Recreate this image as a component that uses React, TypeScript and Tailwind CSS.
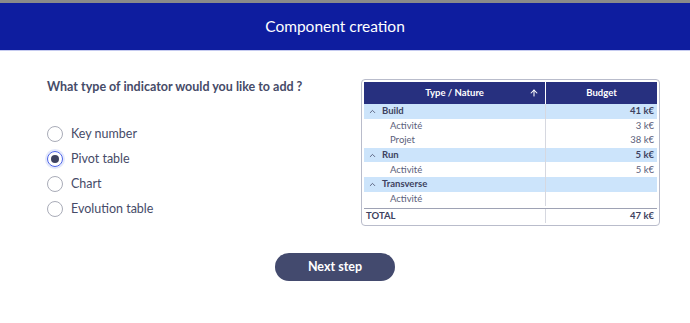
import { ChevronUp, ArrowUp } from 'lucide-react';

const OPTIONS = ['Key number', 'Pivot table', 'Chart', 'Evolution table'];

const ROWS = [
  { label: 'Build', value: '41 k€', group: true },
  { label: 'Activité', value: '3 k€' },
  { label: 'Projet', value: '38 k€' },
  { label: 'Run', value: '5 k€', group: true },
  { label: 'Activité', value: '5 k€' },
  { label: 'Transverse', value: '', group: true },
  { label: 'Activité', value: '' },
];

function PivotPreview() {
  return (
    <div className="w-[299px] rounded-[4px] border border-[#b9bccb] p-[2px] text-[9.5px] text-[#3d4260]">
      <div className="grid grid-cols-[182px_1fr] h-[22px] bg-[#27307f] font-bold text-white">
        <div className="relative flex items-center justify-center border-r border-white">
          Type / Nature
          <ArrowUp className="absolute right-[6px] h-[10px] w-[10px]" strokeWidth={2.5} />
        </div>
        <div className="flex items-center justify-center">Budget</div>
      </div>
      {ROWS.map((row, i) => (
        <div
          key={i}
          className={`grid grid-cols-[182px_1fr] h-[14.6px] ${row.group ? 'bg-[#cce4fb] font-bold' : 'bg-white'}`}
        >
          <div className="flex items-center border-r border-[#d6d8e0]">
            {row.group ? (
              <>
                <ChevronUp className="ml-[4px] mr-[5px] h-[9px] w-[9px]" strokeWidth={2} />
                {row.label}
              </>
            ) : (
              <span className="pl-[26px] text-[#5b607a]">{row.label}</span>
            )}
          </div>
          <div className={`flex items-center justify-end pr-[3px] ${row.group ? '' : 'text-[#5b607a]'}`}>
            {row.value}
          </div>
        </div>
      ))}
      <div className="mt-[2px] grid grid-cols-[182px_1fr] h-[15px] border-t border-[#9ea2b4] font-bold">
        <div className="flex items-center border-r border-[#d6d8e0] pl-[2px]">TOTAL</div>
        <div className="flex items-center justify-end pr-[3px]">47 k€</div>
      </div>
    </div>
  );
}

export default function App() {
  return (
    <div className="h-[323px] w-[690px] bg-white font-['Lato',sans-serif] text-[#464b68]">
      <div className="h-[3px] bg-[#8a8a8a]" />
      <div className="flex h-[48px] items-center justify-center border-b border-[#c6cbf0] bg-[#0e1d9f] pr-[20px] text-[15.5px] text-white">
        Component creation
      </div>

      <div className="flex pl-[47px] pt-[27px]">
        <div className="w-[314px]">
          <div className="text-[12.5px] font-bold leading-[18px]">What type of indicator would you like to add ?</div>
          <div className="mt-[29px] flex flex-col gap-[7px]">
            {OPTIONS.map((opt) => {
              const checked = opt === 'Pivot table';
              return (
                <label key={opt} className="flex h-[18px] items-center text-[12.5px]">
                  <span
                    className={`flex h-[16px] w-[16px] items-center justify-center rounded-full border ${
                      checked
                        ? 'border-[#4b63e8] shadow-[0_0_0_2px_#e3e8fb]'
                        : 'border-[#a9acb8]'
                    }`}
                  >
                    {checked && <span className="h-[8px] w-[8px] rounded-full bg-[#3d4260]" />}
                  </span>
                  <span className="ml-[8px]">{opt}</span>
                </label>
              );
            })}
          </div>
        </div>
        <div className="pt-[1px]">
          <PivotPreview />
        </div>
      </div>

      <div className="mt-[27px] flex justify-center pr-[20px]">
        <button className="h-[28px] w-[120px] rounded-full bg-[#434a6e] text-[12.5px] font-bold text-white">
          Next step
        </button>
      </div>
    </div>
  );
}
